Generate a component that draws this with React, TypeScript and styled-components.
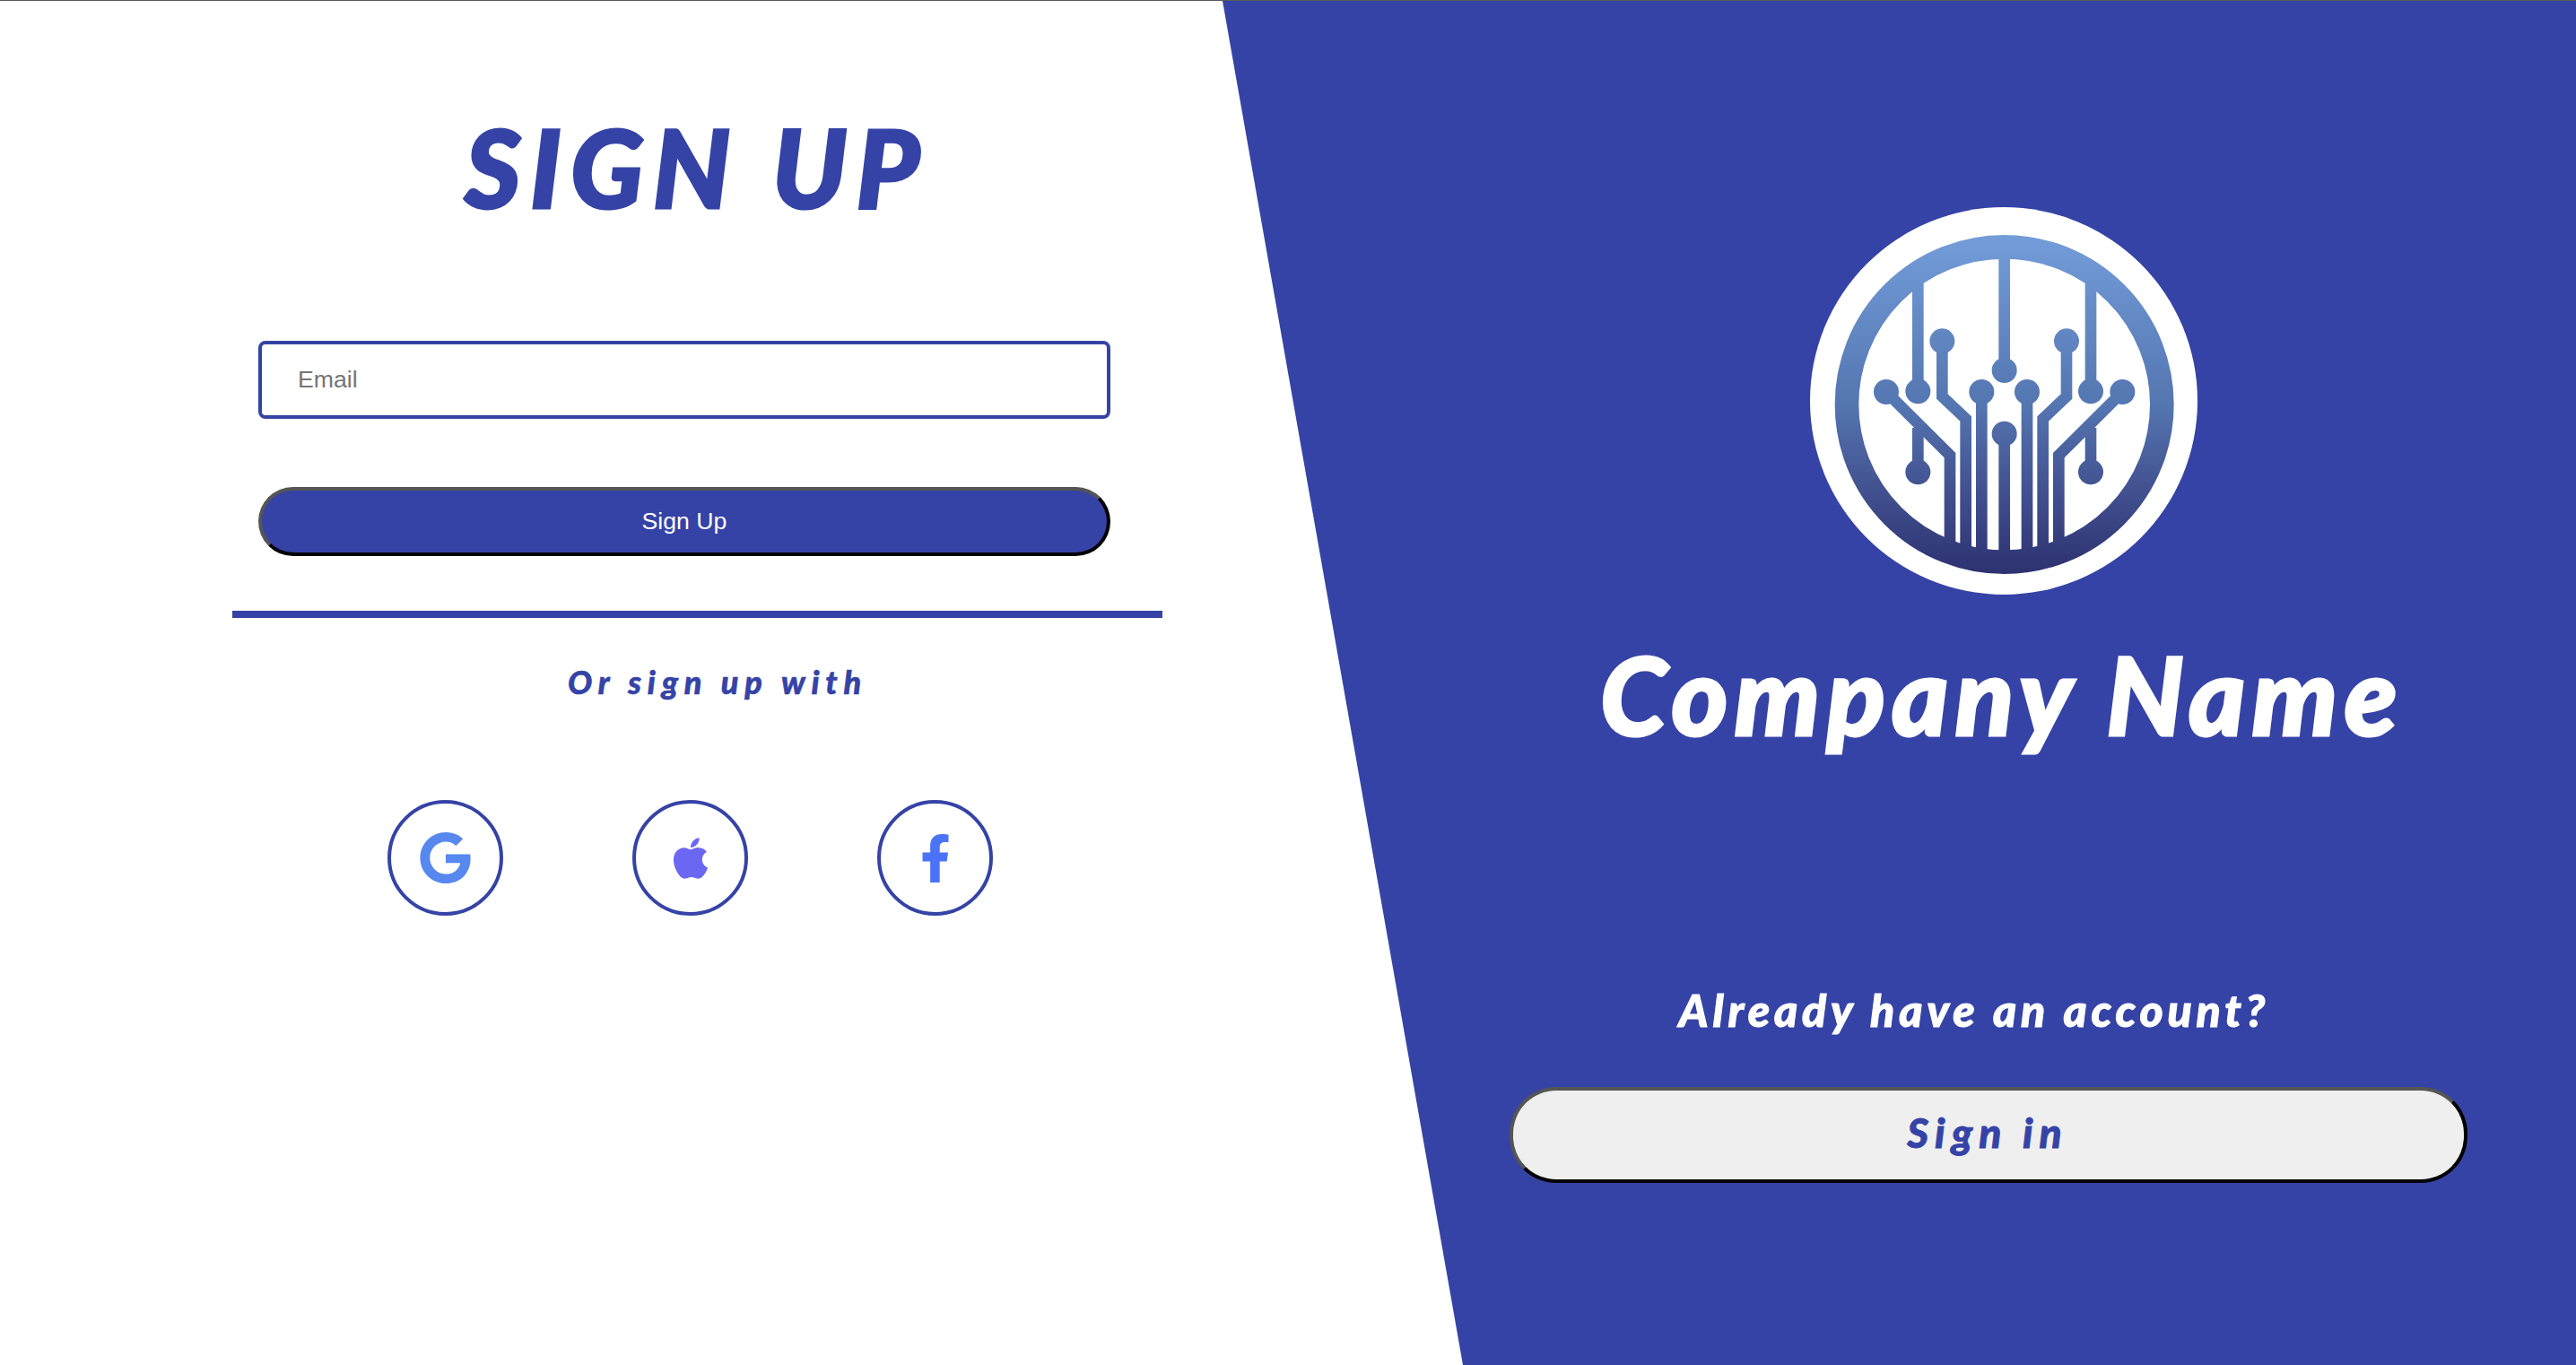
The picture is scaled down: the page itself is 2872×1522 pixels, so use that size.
import styled, { createGlobalStyle } from "styled-components";
import { FaApple, FaFacebookF, FaGoogle } from "react-icons/fa";

const BLUE = "#3543a6";
const DISPLAY = `"Lato", "Open Sans", sans-serif`;

const GlobalStyle = createGlobalStyle`
  html, body {
    margin: 0;
    padding: 0;
    background: #fff;
  }
  * {
    box-sizing: border-box;
  }
`;

const Page = styled.div`
  display: grid;
  grid-template-columns: 1363px 1fr;
  width: 2872px;
  height: 1522px;
  overflow: hidden;
  border-top: 1px solid #5a5a5a;
`;

const FormPanel = styled.section`
  display: flex;
  flex-direction: column;
  align-items: flex-start;
  padding: 125px 0 0 288px;
`;

const Title = styled.h1`
  width: 950px;
  margin: 0 0 134px;
  padding-left: 28px;
  font: italic 900 120px/120px ${DISPLAY};
  letter-spacing: 10.5px;
  -webkit-text-stroke: 3px ${BLUE};
  text-align: center;
  color: ${BLUE};
`;

const EmailInput = styled.input`
  width: 950px;
  height: 87px;
  padding: 0 40px;
  border: 4px solid ${BLUE};
  border-radius: 8px;
  outline: none;
  background: #fff;
  font: 26.67px "Liberation Sans", Arial, sans-serif;

  &::placeholder {
    color: #757575;
    opacity: 1;
  }
`;

const PrimaryButton = styled.button`
  width: 950px;
  height: 77px;
  margin-top: 76px;
  border: 4px solid;
  border-color: #555 #000 #000 #555;
  border-radius: 40px;
  background: ${BLUE};
  color: #fff;
  font: 26.67px "Liberation Sans", Arial, sans-serif;
`;

const Divider = styled.hr`
  width: 1037px;
  height: 8px;
  margin: 61px 0 0 -29px;
  border: 0;
  background: ${BLUE};
`;

const AltLabel = styled.p`
  width: 1024px;
  margin: 51px 0 0;
  font: italic 900 36px/40px ${DISPLAY};
  letter-spacing: 6.8px;
  -webkit-text-stroke: 0.6px ${BLUE};
  text-align: center;
  color: ${BLUE};
`;

const SocialRow = styled.div`
  display: flex;
  gap: 144px;
  margin: 112px 0 0 144px;
`;

const SocialButton = styled.a<{ $color: string }>`
  display: flex;
  align-items: center;
  justify-content: center;
  width: 129px;
  height: 129px;
  border: 4px solid ${BLUE};
  border-radius: 50%;
  color: ${(p) => p.$color};
`;

const BrandPanel = styled.section`
  display: flex;
  flex-direction: column;
  align-items: center;
  padding: 230px 0 0 233px;
  background: ${BLUE};
  clip-path: polygon(0 0, 100% 0, 100% 100%, 268px 100%);
`;

const LogoDisc = styled.svg`
  display: block;
  flex: none;
  width: 432px;
  height: 432px;
`;

const CompanyName = styled.h2`
  margin: 36px 4px 0 0;
  font: italic 900 120px/150px ${DISPLAY};
  letter-spacing: 7.4px;
  -webkit-text-stroke: 3px #fff;
  white-space: nowrap;
  color: #fff;
`;

const AccountPrompt = styled.p`
  margin: 247px 66px 0 0;
  font: italic 900 50px/60px ${DISPLAY};
  letter-spacing: 4.8px;
  -webkit-text-stroke: 1px #fff;
  white-space: nowrap;
  color: #fff;
`;

const SecondaryButton = styled.button`
  flex: none;
  width: 1068px;
  height: 107px;
  margin: 56px 34px 0 0;
  padding: 0 2px 5px 0;
  border: 4px solid;
  border-color: #555 #000 #000 #555;
  border-radius: 52px;
  background: #efefef;
  color: ${BLUE};
  font: italic 900 46px/1 ${DISPLAY};
  letter-spacing: 7px;
  -webkit-text-stroke: 0.8px ${BLUE};
`;

// traces on the left half, mirrored around x=825
const Traces = () => (
  <>
    <path d="M536 300V708" />
    <path d="M617 540V725L696 800V1260" />
    <path d="M430 710L643 922V1260" />
    <path d="M536 830V978" />
    <path d="M749 710V1260" />
  </>
);

const Pads = () => (
  <>
    <circle cx="430" cy="710" r="42" />
    <circle cx="536" cy="708" r="42" />
    <circle cx="617" cy="540" r="42" />
    <circle cx="536" cy="978" r="42" />
    <circle cx="749" cy="710" r="42" />
  </>
);

const Logo = () => (
  <LogoDisc viewBox="175 92 1296 1296" aria-label="Company logo">
    <defs>
      <linearGradient id="chip" gradientUnits="userSpaceOnUse" x1="0" y1="185" x2="0" y2="1320">
        <stop offset="0" stopColor="#739dd9" />
        <stop offset="0.5" stopColor="#5476b1" />
        <stop offset="0.75" stopColor="#425190" />
        <stop offset="1" stopColor="#2d3170" />
      </linearGradient>
    </defs>
    <circle cx="823" cy="740" r="648" fill="#fff" />
    <circle cx="825" cy="752" r="527" fill="none" stroke="url(#chip)" strokeWidth="80" />
    <g stroke="url(#chip)" strokeWidth="38" fill="none">
      <path d="M825 240V638" />
      <path d="M825 850V1260" />
      <Traces />
      <g transform="matrix(-1 0 0 1 1650 0)">
        <Traces />
      </g>
    </g>
    <g fill="url(#chip)">
      <circle cx="825" cy="638" r="42" />
      <circle cx="825" cy="850" r="42" />
      <Pads />
      <g transform="matrix(-1 0 0 1 1650 0)">
        <Pads />
      </g>
    </g>
  </LogoDisc>
);

export default function App() {
  return (
    <>
      <GlobalStyle />
      <Page>
        <FormPanel>
          <Title>SIGN UP</Title>
          <EmailInput type="email" placeholder="Email" />
          <PrimaryButton type="button">Sign Up</PrimaryButton>
          <Divider />
          <AltLabel>Or sign up with</AltLabel>
          <SocialRow>
            <SocialButton $color="#5688f0">
              <FaGoogle size={59} />
            </SocialButton>
            <SocialButton $color="#6c67f3">
              <FaApple size={52} />
            </SocialButton>
            <SocialButton $color="#4a73f8">
              <FaFacebookF size={54} />
            </SocialButton>
          </SocialRow>
        </FormPanel>
        <BrandPanel>
          <Logo />
          <CompanyName>Company Name</CompanyName>
          <AccountPrompt>Already have an account?</AccountPrompt>
          <SecondaryButton type="button">Sign in</SecondaryButton>
        </BrandPanel>
      </Page>
    </>
  );
}
